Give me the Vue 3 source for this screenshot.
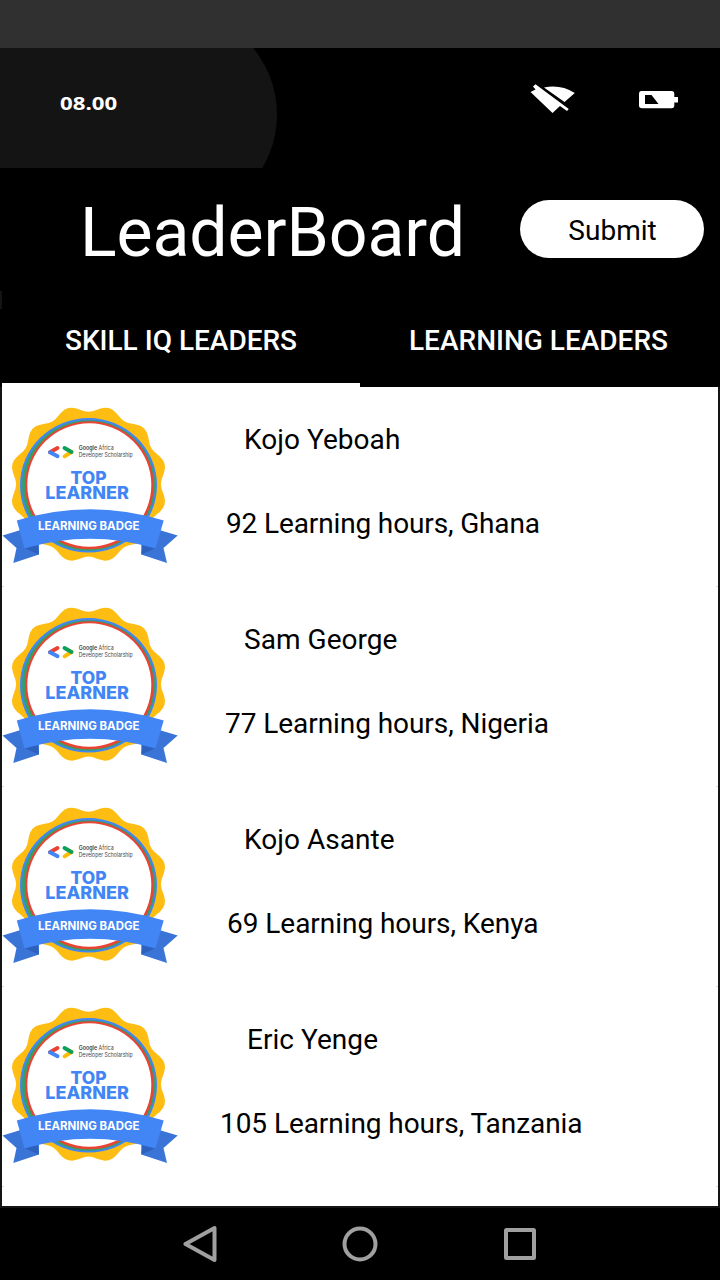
<script setup>
const leaders = [
  { name: 'Kojo Yeboah', detail: '92 Learning hours, Ghana', nameX: 242, detailX: 224, width: 314 },
  { name: 'Sam George', detail: '77 Learning hours, Nigeria', nameX: 242, detailX: 223, width: 324 },
  { name: 'Kojo Asante', detail: '69 Learning hours, Kenya', nameX: 242, detailX: 225, width: 311.5 },
  { name: 'Eric Yenge', detail: '105 Learning hours, Tanzania', nameX: 245, detailX: 218, width: 362.5 },
]

// Twelve-lobed outline of the badge.
const points = []
for (let deg = 0; deg < 360; deg += 3) {
  const a = (deg * Math.PI) / 180
  const r = 75.6 - 3.2 * Math.cos(12 * a)
  points.push(`${(88.5 + r * Math.sin(a)).toFixed(2)},${(89.2 - r * Math.cos(a)).toFixed(2)}`)
}
const scallop = points.join(' ')
</script>

<template>
  <main class="screen">
    <div class="system-bar"></div>
    <div class="status">
      <div class="status-shade"><span class="clock">08.00</span></div>
      <svg class="wifi" width="46" height="30" viewBox="0 0 46 30">
        <path d="M.500 8 L5.500 5.500 L3 2.500 L5.500 .200 L38.800 25 L37 27 L30 22 L22.500 29 Z M14 3.500 Q30.500 0 44.800 9 L34.500 18 Z" fill="#fff" />
      </svg>
      <svg class="battery" width="39" height="18" viewBox="0 0 39 18">
        <path fill-rule="evenodd" d="M2.500 0H32.500Q35.300 0 35.300 3V6H39V11.500H35.300V14.500Q35.300 17.300 32.500 17.300H3Q0 17.300 0 14.500V3Q0 0 2.500 0ZM6 4V13H19.500L12.500 4Z" fill="#fff" />
      </svg>
    </div>
    <header class="header">
      <h1>LeaderBoard</h1>
      <button>Submit</button>
    </header>
    <nav class="tabs">
      <div class="tab active"><span>SKILL IQ LEADERS</span></div>
      <div class="tab second"><span>LEARNING LEADERS</span></div>
    </nav>
    <section class="list">
      <article v-for="l in leaders" :key="l.name" class="row">
        <svg class="badge" width="180" height="180" viewBox="0 0 180 180">
          <polygon :points="scallop" fill="#fdbd13" />
          <ellipse cx="88.500" cy="90.300" rx="68.500" ry="67.200" fill="#4285f4" />
          <ellipse cx="88.600" cy="90.500" rx="66.500" ry="65.200" fill="#34a063" />
          <ellipse cx="89.400" cy="90.300" rx="64.300" ry="64" fill="#ea4335" />
          <ellipse cx="89.300" cy="90" rx="62" ry="61.800" fill="#fff" />
          <g fill="none" stroke-width="3.900" stroke-linecap="round">
            <path d="M50 57.300 L57.500 53" stroke="#ea4335" />
            <path d="M50 57.300 L57.500 61.300" stroke="#4285f4" />
            <path d="M71.500 57 L64.500 61.300" stroke="#fbbc05" />
            <path d="M64.500 53 L71.500 57" stroke="#109d58" />
          </g>
          <g class="org">
            <text x="78.700" y="54.800" textLength="35" lengthAdjust="spacingAndGlyphs"><tspan class="strong">Google</tspan> Africa</text>
            <text x="78.700" y="61.500" textLength="54" lengthAdjust="spacingAndGlyphs">Developer Scholarship</text>
          </g>
          <text class="top" x="70.500" y="89.200" textLength="36" lengthAdjust="spacingAndGlyphs">TOP</text>
          <text class="top" x="45.300" y="104.200" textLength="83.500" lengthAdjust="spacingAndGlyphs">LEARNER</text>
          <path d="M2.500 140.600 L24 134 L39 150 V159.400 L13.300 168 L16.500 153Z M177.700 140.600 L156 134 L141.300 150 V159.400 L167 168 L163.500 153Z" fill="#3b74d7" />
          <path d="M24.500 153.300 L37.500 149 L39 159.400Z M155.500 153.300 L142.500 149 L141.300 159.400Z" fill="#2e61be" />
          <path d="M16.800 125.500 Q90 103 163.700 125.500 L155.500 153.500 Q90 134 24.500 153.500Z" fill="#4285f4" />
          <text class="ribbon" x="38" y="134.800" textLength="101.500" lengthAdjust="spacingAndGlyphs">LEARNING BADGE</text>
        </svg>
        <p class="name" :style="{ marginLeft: l.nameX + 'px' }">{{ l.name }}</p>
        <svg class="detail" :style="{ marginLeft: l.detailX + 'px' }" width="400" height="34">
          <text x="0" y="26" :textLength="l.width">{{ l.detail }}</text>
        </svg>
      </article>
    </section>
    <footer class="navigation">
      <svg width="34" height="38" viewBox="0 0 34 38"><path d="M31.500 3 V35 L2.500 19Z" /></svg>
      <svg width="36" height="36" viewBox="0 0 36 36"><circle cx="18" cy="18" r="15.500" /></svg>
      <svg width="34" height="34" viewBox="0 0 34 34"><rect x="3" y="3" width="28" height="28" rx=".5" /></svg>
    </footer>
  </main>
</template>

<style>
body { margin: 0; background: #000; }
</style>

<style scoped>
.screen { width: 720px; height: 1280px; overflow: hidden; background: #000; color: #fff; font-family: Roboto, sans-serif; display: flex; flex-direction: column; }
.system-bar { height: 48px; background: #303030; flex: none; }
.status { height: 120px; flex: none; display: flex; overflow: hidden; }
.status-shade { width: 276.500px; height: 209px; margin-top: -38.500px; border-radius: 0 104.500px 104.500px 0; background: #141414; flex: none; overflow: hidden; }
.clock { display: block; margin: 83px 0 0 59.500px; font: 700 17.500px/20px "Open Sans", sans-serif; transform: scaleX(1.27); transform-origin: left; width: 60px; }
.wifi { margin: 36px 0 0 253.500px; flex: none; }
.battery { margin: 43px 0 0 63px; flex: none; }
.header { height: 123px; flex: none; display: flex; align-items: flex-start; }
h1 { font-size: 68px; line-height: 80px; font-weight: 400; letter-spacing: -.1px; margin: 25px 0 0 80px; width: 440px; white-space: nowrap; }
button { width: 184px; height: 58px; margin-top: 32px; padding: 4px 0 0 1px; border: 0; border-radius: 29px; background: #fff; color: #000; font: 28px/34px Roboto, sans-serif; }
.tabs { height: 96px; flex: none; display: flex; font-size: 28px; font-weight: 500; line-height: 34px; background: linear-gradient(#141414, #141414) 0 0 / 2px 18px no-repeat; }
.tab { width: 360px; height: 96px; box-sizing: border-box; padding-top: 33px; text-align: center; }
.tab span { white-space: nowrap; }
.active { padding-left: 2px; background: linear-gradient(#fff, #fff) 2px 92px / 358px 4px no-repeat; }
.second { padding-right: 3px; }
.list { height: 821px; flex: none; box-sizing: border-box; border: 2px solid #141414; border-top: 0; background: #fff; color: #000; }
.row { position: relative; height: 200px; display: flow-root; background: linear-gradient(#ddd, #ddd) 0 199px / 2px 1px no-repeat, linear-gradient(#ddd, #ddd) 714px 199px / 2px 1px no-repeat; }
.badge { position: absolute; left: -2px; top: 8px; }
.name { font-size: 28px; line-height: 34px; white-space: nowrap; margin: 36px 0 0; letter-spacing: .04px; }
.detail { display: block; margin-top: 50px; font-size: 28px; fill: #000; }
.org { font: 6px Inter, sans-serif; fill: #444; }
.strong { font-weight: 600; }
.top { font: 800 17px Inter, sans-serif; fill: #4285f4; }
.ribbon { font: 700 11.300px Inter, sans-serif; fill: #fff; }
.navigation { height: 72px; display: flex; align-items: center; padding: 0 183px; justify-content: space-between; }
.navigation svg { fill: none; stroke: #a0a0a0; stroke-width: 4; stroke-linejoin: round; }
</style>
